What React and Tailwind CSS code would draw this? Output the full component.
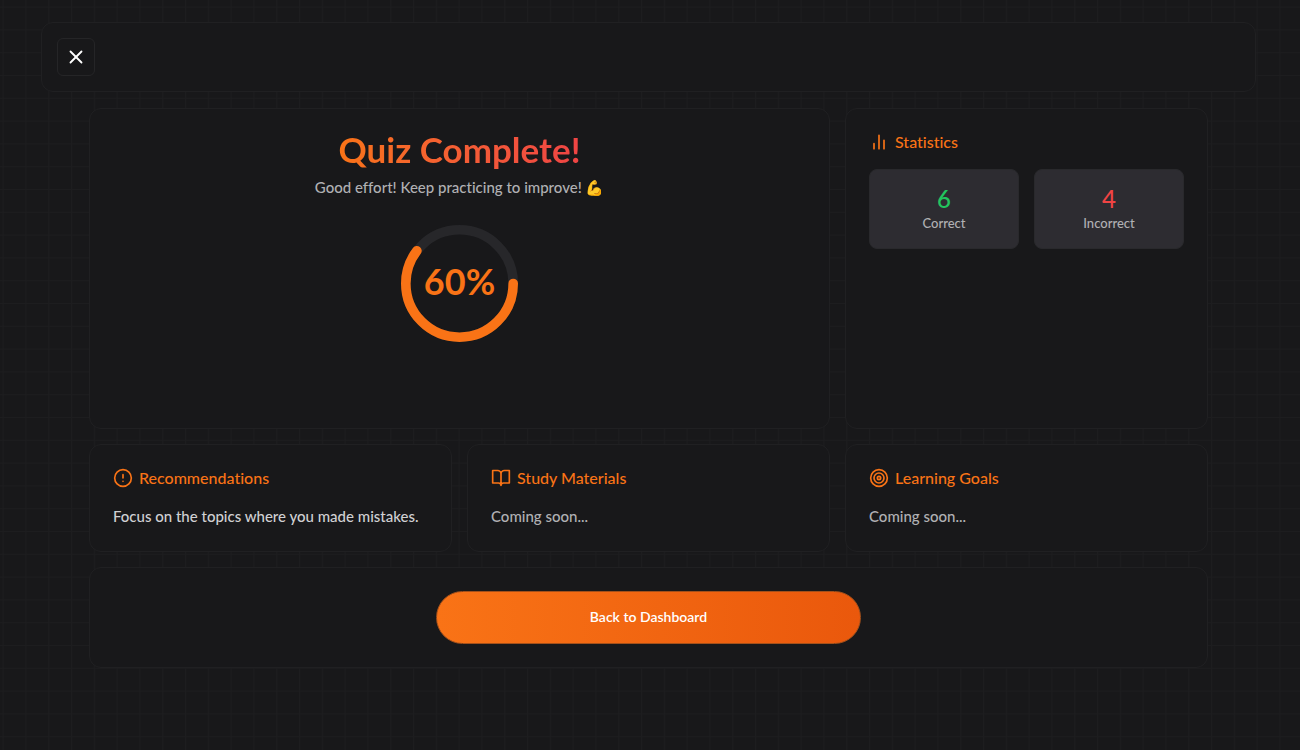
import React from 'react';
import { X } from 'lucide-react';

function GridBackground() {
  return (
    <svg className="pointer-events-none absolute inset-0 h-full w-full" aria-hidden="true">
      <defs>
        <pattern id="grid" x="2.6" y="6.6" width="22.8" height="22.8" patternUnits="userSpaceOnUse">
          <path d="M22.8 0.5H0.5V22.8" fill="none" stroke="#1d1d1f" strokeWidth="1" />
        </pattern>
      </defs>
      <rect width="100%" height="100%" fill="url(#grid)" />
    </svg>
  );
}

function Icon({ children }) {
  return (
    <svg
      className="size-5 shrink-0"
      viewBox="0 0 24 24"
      fill="none"
      stroke="currentColor"
      strokeWidth="2"
      strokeLinecap="round"
      strokeLinejoin="round"
      aria-hidden="true"
    >
      {children}
    </svg>
  );
}

const statisticsIcon = (
  <Icon>
    <path d="M18 20V10M12 20V4M6 20v-6" />
  </Icon>
);

const alertIcon = (
  <Icon>
    <circle cx="12" cy="12" r="10" />
    <path d="M12 8v4M12 16h.01" />
  </Icon>
);

const bookIcon = (
  <Icon>
    <path d="M2 3h6a4 4 0 0 1 4 4v14a3 3 0 0 0-3-3H2zM22 3h-6a4 4 0 0 0-4 4v14a3 3 0 0 1 3-3h7z" />
  </Icon>
);

const goalIcon = (
  <Icon>
    <circle cx="12" cy="12" r="10" />
    <circle cx="12" cy="12" r="6" />
    <circle cx="12" cy="12" r="2" />
  </Icon>
);

function Card({ className = '', children }) {
  return (
    <section className={`rounded-xl border border-[#202022] bg-[#18181a] p-[23px] ${className}`}>
      {children}
    </section>
  );
}

function CardTitle({ icon, children }) {
  return (
    <h2 className="flex items-center gap-1.5 text-base leading-5 font-medium text-[#f97316]">
      {icon}
      {children}
    </h2>
  );
}

function StatTile({ value, label, color }) {
  return (
    <div className="flex h-20 flex-col items-center justify-center rounded-lg border border-[#29292c] bg-[#2d2c31]">
      <span className={`text-2xl leading-7 font-medium ${color}`}>{value}</span>
      <span className="text-[13px] leading-5 font-medium text-[#b0b0b3]">{label}</span>
    </div>
  );
}

function ScoreRing({ percent }) {
  const length = 2 * Math.PI * 54;
  return (
    <div className="relative mt-[26px] flex size-[117px] items-center justify-center pb-1.5">
      <svg className="absolute inset-0 h-full w-full" viewBox="0 0 117 117" fill="none" aria-hidden="true">
        <circle cx="58.5" cy="58.5" r="53.7" stroke="#27272a" strokeWidth="9.6" />
        <circle
          cx="58.5"
          cy="58.5"
          r="53.7"
          stroke="#f97316"
          strokeWidth="9.6"
          strokeLinecap="round"
          strokeDasharray={`${(length * percent) / 100} ${length}`}
        />
      </svg>
      <span className="relative text-4xl leading-9 font-bold text-[#f97316]">{percent}%</span>
    </div>
  );
}

export default function App() {
  return (
    <div className="relative min-h-screen bg-[#18181a] pt-[22px] pr-[3px] pb-10 font-['Lato','Noto_Color_Emoji',sans-serif] text-[15px] leading-[23px] font-medium [font-variant-ligatures:none]">
      <GridBackground />
      <div className="relative flex flex-col gap-4">
        <header className="mx-[41px] flex h-[70px] items-center rounded-xl border border-[#202022] bg-[#18181a] px-[15px]">
          <button
            type="button"
            aria-label="Close"
            className="flex size-[38px] items-center justify-center rounded-md border border-[#252527] text-white"
          >
            <X className="size-[22px]" />
          </button>
        </header>

        <main className="mx-[89px] grid grid-cols-3 gap-[15px]">
          <Card className="col-span-2 flex min-h-[321px] flex-col items-center">
            <h1 className="bg-linear-to-r from-[#f97316] to-[#ef4444] bg-clip-text pb-1 text-[35px] leading-[34px] font-bold text-transparent">
              Quiz Complete!
            </h1>
            <p className="mt-1.5 text-[#b0b0b3]">Good effort! Keep practicing to improve! 💪</p>
            <ScoreRing percent={60} />
          </Card>

          <Card>
            <CardTitle icon={statisticsIcon}>Statistics</CardTitle>
            <div className="mt-[17px] grid grid-cols-2 gap-[15px]">
              <StatTile value="6" label="Correct" color="text-[#22c55e]" />
              <StatTile value="4" label="Incorrect" color="text-[#ef4444]" />
            </div>
          </Card>

          <Card>
            <CardTitle icon={alertIcon}>Recommendations</CardTitle>
            <p className="mt-[17px] text-[#d0d0d3]">Focus on the topics where you made mistakes.</p>
          </Card>
          <Card>
            <CardTitle icon={bookIcon}>Study Materials</CardTitle>
            <p className="mt-[17px] text-[#b0b0b3]">Coming soon...</p>
          </Card>
          <Card>
            <CardTitle icon={goalIcon}>Learning Goals</CardTitle>
            <p className="mt-[17px] text-[#b0b0b3]">Coming soon...</p>
          </Card>

          <Card className="col-span-3 flex justify-center">
            <button
              type="button"
              className="h-[53px] w-full max-w-[425px] rounded-full border border-[#a4501a] bg-linear-to-r from-[#f97316] to-[#ea580c] pb-0.5 text-sm font-semibold text-white"
            >
              Back to Dashboard
            </button>
          </Card>
        </main>
      </div>
    </div>
  );
}
